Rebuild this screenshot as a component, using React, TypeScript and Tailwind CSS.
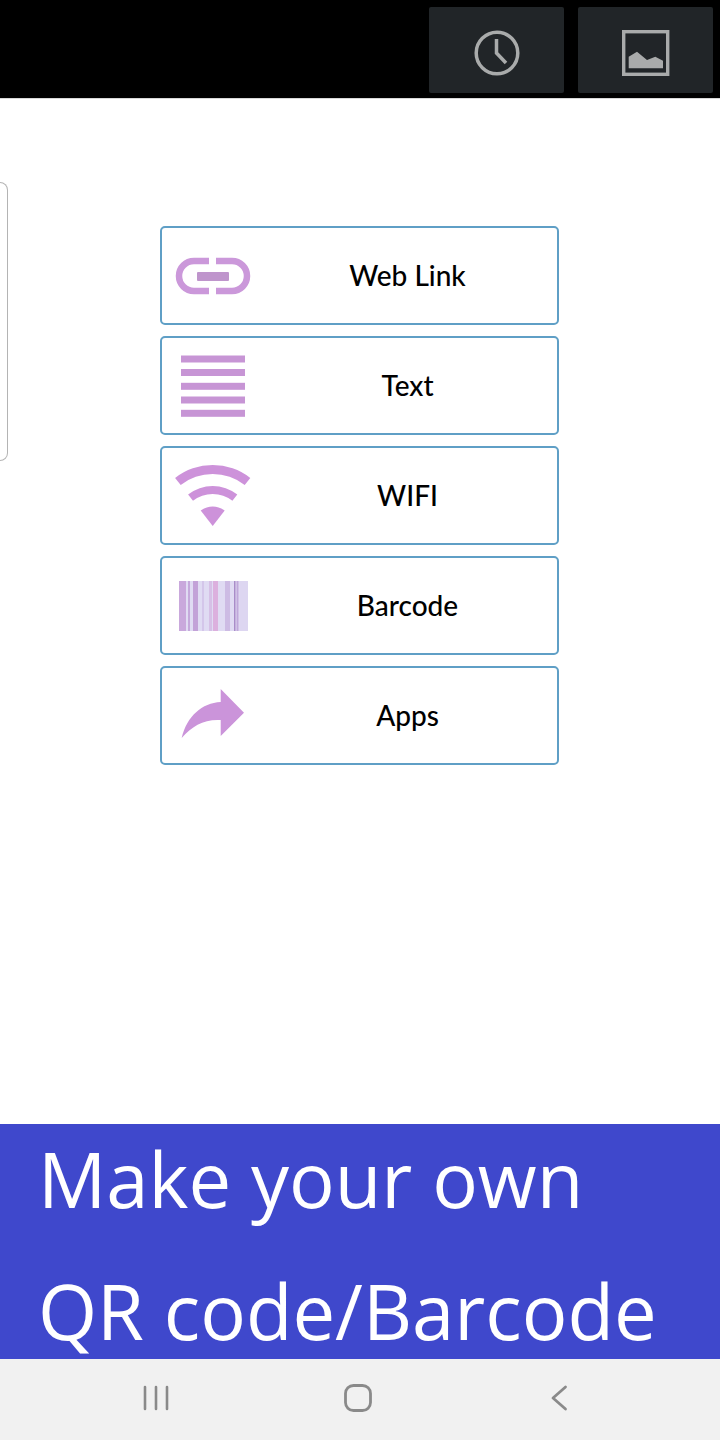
const iconClass = "w-[82px] h-[70px] overflow-visible";

const LinkIcon = () => (
  <svg viewBox="0 0 82 70" className={`${iconClass} blur-[0.6px]`} fill="none">
    <path d="M37 20H22a15 15 0 0 0 0 30H37" stroke="#cb98da" strokeWidth="6.5" />
    <path d="M44 20H60a15 15 0 0 1 0 30H44" stroke="#cb98da" strokeWidth="6.5" />
    <rect x="25" y="31" width="32" height="9" rx="1" fill="#bf95cc" />
  </svg>
);

const TextIcon = () => (
  <svg viewBox="0 0 82 70" className={iconClass} fill="#c795d5">
    <rect x="9" y="4.5" width="64" height="7" />
    <rect x="9" y="18" width="64" height="7" />
    <rect x="9" y="31.8" width="64" height="7" />
    <rect x="9" y="45.5" width="64" height="7" />
    <rect x="9" y="58.8" width="64" height="7" />
  </svg>
);

const WifiIcon = () => (
  <svg viewBox="0 0 82 70" className={iconClass} fill="#cd92da">
    <path d="M3.1 16.9A61 61 0 0 1 78.3 16.9L72.7 24A52 52 0 0 0 8.7 24Z" />
    <path d="M16.1 33.5A40 40 0 0 1 65.3 33.5L60.4 39.8A32 32 0 0 0 21 39.8Z" />
    <path d="M40.7 65L28.7 49.6A19.5 19.5 0 0 1 52.7 49.6Z" />
  </svg>
);

const BarcodeIcon = () => (
  <svg viewBox="0 0 82 70" className={`${iconClass} blur-[0.7px]`}>
    <rect x="7" y="10" width="69" height="50" fill="#e0dbf3" />
    <rect x="7" y="10" width="7" height="50" fill="#c9a8dc" />
    <rect x="16" y="10" width="2" height="50" fill="#c5a9dc" />
    <rect x="21" y="10" width="5" height="50" fill="#c3a2d8" />
    <rect x="30" y="10" width="2" height="50" fill="#d4c6ea" />
    <rect x="37" y="10" width="3" height="50" fill="#d6c0e6" />
    <rect x="41" y="10" width="5" height="50" fill="#dcb0de" />
    <rect x="53" y="10" width="5" height="50" fill="#cdbbe4" />
    <rect x="62" y="10" width="1.5" height="50" fill="#a98cc8" />
    <rect x="64.5" y="10" width="2" height="50" fill="#bfa8da" />
    <rect x="67.5" y="10" width="8.5" height="50" fill="#ddd6f1" />
  </svg>
);

const AppsIcon = () => (
  <svg viewBox="0 0 82 70" className={iconClass} fill="#cb94da">
    <path d="M48.7 8L72 31.7L48.7 55V39C32 38 20 45 9.7 57C15 35 30 22 48.7 21Z" />
  </svg>
);

const items = [
  { label: "Web Link", icon: <LinkIcon /> },
  { label: "Text", icon: <TextIcon /> },
  { label: "WIFI", icon: <WifiIcon /> },
  { label: "Barcode", icon: <BarcodeIcon /> },
  { label: "Apps", icon: <AppsIcon /> },
];

export default function App() {
  return (
    <div className="relative flex flex-col w-[720px] h-[1440px] overflow-hidden bg-white">
      <div className="flex justify-end items-start gap-[14px] h-[99px] shrink-0 pr-[7px] pt-[7px] bg-black border-b border-[#d8d8d8]">
        <button className="flex items-center justify-center w-[135px] h-[86px] pt-[6px] rounded-[2px] bg-[#212528]">
          <svg viewBox="0 0 48 48" className="w-[48px] h-[48px]" fill="none" stroke="#a9abab" strokeWidth="3.5">
            <circle cx="24" cy="24" r="20.8" />
            <path d="M23.5 10V24L33 34" />
          </svg>
        </button>
        <button className="flex items-center justify-center w-[135px] h-[86px] pt-[6px] rounded-[2px] bg-[#212528]">
          <svg viewBox="0 0 48 46" className="w-[48px] h-[46px]" fill="none">
            <rect x="1.7" y="1.7" width="44" height="42.6" stroke="#a9abab" strokeWidth="3.4" />
            <path d="M6.7 38.3V26.7L15 21.7L25 30L33.3 26.7L41 30.7V38.3Z" fill="#a9abab" />
          </svg>
        </button>
      </div>

      <div className="absolute left-0 top-[182px] w-[8px] h-[279px] border border-l-0 border-[#b4b4b4] rounded-r-[8px] bg-white" />

      <div className="flex-1 flex flex-col items-center gap-[11px] pt-[127px] pr-[2px]">
        {items.map((item) => (
          <div
            key={item.label}
            className="flex items-center w-[399px] h-[99px] border-2 border-[#5f9fc6] rounded-[5px] bg-white"
          >
            <div className="flex items-center w-[95px] pl-[10px]">{item.icon}</div>
            <span className="flex-1 pb-[2px] pl-[2px] text-center text-[28px] font-medium text-black font-['Lato',sans-serif]">
              {item.label}
            </span>
          </div>
        ))}
      </div>

      <div className="h-[235px] shrink-0 bg-[#3f48cc] pl-[38px] text-white text-[76px] font-['Open_Sans',sans-serif]">
        <div className="leading-[109px]">Make your own</div>
        <div className="mt-[31px] leading-[94px]">QR code/Barcode</div>
      </div>

      <div className="flex items-center justify-center h-[81px] shrink-0 pr-[5px] pb-[4px] bg-[#f1f1f1]">
        <div className="flex justify-center w-[202px]">
          <svg viewBox="0 0 26 26" className="w-[26px] h-[26px]" fill="none" stroke="#8a8a8a" strokeWidth="2.6" strokeLinecap="round">
            <path d="M2 2V24M13 2V24M24 2V24" />
          </svg>
        </div>
        <div className="flex justify-center w-[202px]">
          <svg viewBox="0 0 28 28" className="w-[28px] h-[28px]" fill="none" stroke="#8a8a8a" strokeWidth="2.8">
            <rect x="1.5" y="1.5" width="25" height="25" rx="8" />
          </svg>
        </div>
        <div className="flex justify-center w-[202px]">
          <svg viewBox="0 0 18 26" className="w-[18px] h-[26px] -translate-x-[1px]" fill="none" stroke="#8a8a8a" strokeWidth="2.8" strokeLinecap="round" strokeLinejoin="round">
            <path d="M15.5 2L3 13L15.5 24" />
          </svg>
        </div>
      </div>
    </div>
  );
}
